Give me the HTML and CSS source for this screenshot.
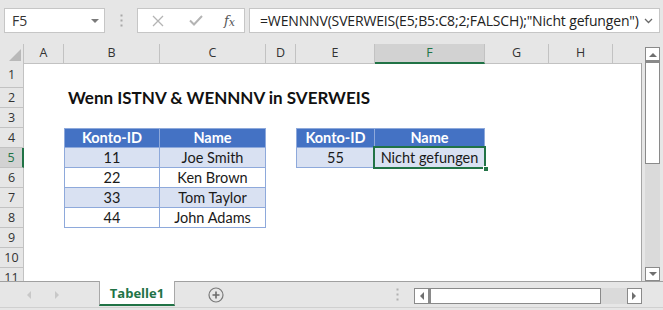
FILE: index.html
```html
<!DOCTYPE html>
<html lang="de">
<head>
<meta charset="utf-8">
<title>SVERWEIS</title>
<link rel="stylesheet" href="styles.css">
</head>
<body>
<div class="app">
  <div class="fbar">
    <div class="namebox"><span>F5</span>
      <svg class="nb-arrow" width="8" height="5" viewBox="0 0 8 5"><path d="M0 0H8L4 4Z" fill="#7a7a7a"/></svg>
    </div>
    <div class="vdots">
      <svg width="3" height="13" viewBox="0 0 3 13"><rect x="0.5" y="0.5" width="2" height="2" fill="#a8a8a8"/><rect x="0.5" y="5.5" width="2" height="2" fill="#a8a8a8"/><rect x="0.5" y="10.5" width="2" height="2" fill="#a8a8a8"/></svg>
    </div>
    <div class="fnbox">
      <svg class="ic-x" width="12" height="12" viewBox="0 0 12 12"><path d="M1 1L11 11M11 1L1 11" stroke="#b4b4b4" stroke-width="1.3" fill="none"/></svg>
      <svg class="ic-ok" width="14" height="11" viewBox="0 0 14 11"><path d="M1 5.5L5 9.5L13 1" stroke="#b4b4b4" stroke-width="2" fill="none"/></svg>
      <span class="fx"><i>f</i><span class="fx-x">x</span></span>
    </div>
    <div class="formula">
      <span class="ftext">=WENNNV(SVERWEIS(E5;B5:C8;2;FALSCH);"Nicht gefungen")</span>
      <svg class="chev" width="9" height="6" viewBox="0 0 9 6"><path d="M1 1L4.5 4.5L8 1" stroke="#6a6a6a" stroke-width="1.3" fill="none"/></svg>
    </div>
  </div>

  <div class="main">
    <div class="sheet">
      <div class="row hdr">
        <div class="corner"><svg width="12" height="12" viewBox="0 0 12 12"><path d="M12 0V12H0Z" fill="#b9b9b9"/></svg></div>
        <div class="ch">A</div><div class="ch">B</div><div class="ch">C</div><div class="ch">D</div><div class="ch">E</div><div class="ch sel">F</div><div class="ch">G</div><div class="ch">H</div><div class="ch last"></div>
      </div>
      <div class="row r1">
        <div class="rh">1</div><div></div><div></div><div></div><div></div><div></div><div></div><div></div><div></div><div class="edge"></div>
      </div>
      <div class="row">
        <div class="rh">2</div><div></div><div class="title-cell"><span class="title">Wenn ISTNV &amp; WENNNV in SVERWEIS</span></div><div></div><div></div><div></div><div></div><div></div><div></div><div class="edge"></div>
      </div>
      <div class="row">
        <div class="rh">3</div><div></div><div></div><div></div><div></div><div></div><div></div><div></div><div></div><div class="edge"></div>
      </div>
      <div class="row">
        <div class="rh">4</div><div></div>
        <div class="t th first">Konto-ID</div><div class="t th">Name</div>
        <div></div>
        <div class="t th first">Konto-ID</div><div class="t th">Name</div>
        <div></div><div></div><div class="edge"></div>
      </div>
      <div class="row">
        <div class="rh sel">5</div><div></div>
        <div class="t band first">11</div><div class="t band">Joe Smith</div>
        <div></div>
        <div class="t band first">55</div><div class="t band active">Nicht gefungen<span class="selbox"></span><span class="handle"></span></div>
        <div></div><div></div><div class="edge"></div>
      </div>
      <div class="row">
        <div class="rh">6</div><div></div>
        <div class="t first">22</div><div class="t">Ken Brown</div>
        <div></div><div></div><div></div><div></div><div></div><div class="edge"></div>
      </div>
      <div class="row">
        <div class="rh">7</div><div></div>
        <div class="t band first">33</div><div class="t band">Tom Taylor</div>
        <div></div><div></div><div></div><div></div><div></div><div class="edge"></div>
      </div>
      <div class="row">
        <div class="rh">8</div><div></div>
        <div class="t first">44</div><div class="t">John Adams</div>
        <div></div><div></div><div></div><div></div><div></div><div class="edge"></div>
      </div>
      <div class="row">
        <div class="rh">9</div><div></div><div></div><div></div><div></div><div></div><div></div><div></div><div></div><div class="edge"></div>
      </div>
      <div class="row">
        <div class="rh">10</div><div></div><div></div><div></div><div></div><div></div><div></div><div></div><div></div><div class="edge"></div>
      </div>
      <div class="row r11">
        <div class="rh">11</div><div></div><div></div><div></div><div></div><div></div><div></div><div></div><div></div><div class="edge"></div>
      </div>
    </div>
    <div class="vscroll">
      <div class="sbtn"><svg width="8" height="5" viewBox="0 0 8 5"><path d="M0 5H8L4 1Z" fill="#6f6f6f"/></svg></div>
      <div class="vthumb"></div>
      <div class="vtrack"></div>
      <div class="sbtn"><svg width="8" height="5" viewBox="0 0 8 5"><path d="M0 0H8L4 4Z" fill="#6f6f6f"/></svg></div>
    </div>
  </div>

  <div class="tabbar">
    <div class="navs">
      <svg width="5" height="8" viewBox="0 0 5 8"><path d="M5 0V8L1 4Z" fill="#c8c8c8"/></svg>
      <svg width="5" height="8" viewBox="0 0 5 8"><path d="M0 0V8L4 4Z" fill="#c8c8c8"/></svg>
    </div>
    <div class="tab">Tabelle1</div>
    <div class="addsheet">
      <svg width="16" height="16" viewBox="0 0 16 16"><circle cx="8" cy="8" r="7" stroke="#7a7a7a" stroke-width="1.2" fill="none"/><path d="M8 4.5V11.5M4.5 8H11.5" stroke="#6a6a6a" stroke-width="1.6"/></svg>
    </div>
    <div class="hdots">
      <svg width="3" height="13" viewBox="0 0 3 13"><rect x="0.5" y="0.5" width="2" height="2" fill="#b0b0b0"/><rect x="0.5" y="5.5" width="2" height="2" fill="#b0b0b0"/><rect x="0.5" y="10.5" width="2" height="2" fill="#b0b0b0"/></svg>
    </div>
    <div class="hscroll">
      <div class="hbtn"><svg width="5" height="8" viewBox="0 0 5 8"><path d="M5 0V8L1 4Z" fill="#6f6f6f"/></svg></div>
      <div class="hthumb"></div>
      <div class="htrack"></div>
      <div class="hbtn"><svg width="5" height="8" viewBox="0 0 5 8"><path d="M0 0V8L4 4Z" fill="#6f6f6f"/></svg></div>
    </div>
  </div>
</div>
</body>
</html>
```

FILE: styles.css
```css
* { box-sizing: border-box; }
html, body { margin: 0; padding: 0; }
body {
  width: 663px;
  height: 310px;
  overflow: hidden;
  background: #e6e6e6;
  font-family: "Open Sans", "Liberation Sans", sans-serif;
  color: #222;
}
.app { width: 663px; height: 310px; display: flex; flex-direction: column; }

/* formula bar */
.fbar {
  height: 44px;
  display: flex;
  align-items: flex-start;
  padding: 8px 0 0 4px;
}
.namebox {
  width: 101px;
  height: 25px;
  background: #fff;
  border: 1px solid #c6c6c6;
  display: flex;
  align-items: center;
  justify-content: space-between;
  padding: 0 5px 0 7px;
  font-size: 14px;
  color: #333;
}
.nb-arrow { margin-top: 1px; }
.vdots {
  width: 32px;
  height: 25px;
  display: flex;
  align-items: center;
  justify-content: center;
}
.fnbox {
  width: 108px;
  height: 25px;
  background: #fff;
  border: 1px solid #c6c6c6;
  display: flex;
  align-items: center;
  padding-left: 14px;
}
.ic-x { margin-right: 25px; }
.ic-ok { margin-right: 21px; }
.fx {
  font-family: "DejaVu Serif", "Liberation Serif", serif;
  font-size: 13px;
  color: #555;
  display: flex;
  align-items: baseline;
}
.fx i { font-style: italic; }
.fx-x { font-size: 11px; font-style: italic; position: relative; top: 1px; margin-left: 0; }
.formula {
  margin-left: 4px;
  width: 411px;
  height: 25px;
  background: #fff;
  border: 1px solid #c6c6c6;
  display: flex;
  align-items: center;
  justify-content: space-between;
  padding: 0 6px 0 10px;
  font-size: 14px;
  color: #222;
  white-space: nowrap;
}
.ftext { letter-spacing: -0.15px; }

/* sheet */
.main { height: 237px; display: flex; }
.sheet { width: 642px; height: 237px; overflow: hidden; }
.row {
  display: grid;
  grid-template-columns: 24px 40px 96px 106px 30px 79px 110px 64px 64px 29px;
  height: 20px;
  background: #fff;
}
.row.hdr { height: 19px; background: #e6e6e6; }
.row.r1 { height: 25px; }
.row.r11 { height: 13px; }
.row > div { position: relative; }
.edge { border-right: 1px solid #a5a5a5; }

.corner {
  border-right: 1px solid #c2c2c2;
  border-bottom: 1px solid #c2c2c2;
  display: flex;
  align-items: flex-end;
  justify-content: flex-end;
  padding: 0 2px 2px 0;
}
.ch {
  border-right: 1px solid #c2c2c2;
  border-bottom: 1px solid #c2c2c2;
  font-size: 12.5px;
  color: #333;
  text-align: center;
  line-height: 18px;
}
.ch.last { border-right: none; }
.ch.sel {
  background: #d2d2d2;
  color: #217346;
  border-bottom: 2px solid #217346;
}
.rh {
  background: #e6e6e6;
  border-right: 1px solid #c2c2c2;
  border-bottom: 1px solid #c2c2c2;
  font-size: 12.5px;
  color: #333;
  text-align: center;
  line-height: 19px;
  overflow: hidden;
}
.r1 .rh { line-height: 24px; }
.r11 .rh { line-height: 19px; border-bottom: none; }
.rh.sel {
  background: #d2d2d2;
  color: #217346;
  border-right: 2px solid #217346;
}

.title-cell { overflow: visible; }
.title {
  position: absolute;
  left: 4px;
  top: 0;
  white-space: nowrap;
  font-family: "Lato", "Liberation Sans", sans-serif;
  font-weight: 700;
  font-size: 17px;
  line-height: 20px;
  color: #111;
}

.t {
  font-family: "Lato", "Liberation Sans", sans-serif;
  font-size: 14.5px;
  color: #1a1a1a;
  text-align: center;
  line-height: 19px;
  border-right: 1px solid #8ea9db;
  border-bottom: 1px solid #8ea9db;
  white-space: nowrap;
}
.t.first { border-left: 1px solid #8ea9db; }
.t.th {
  background: #4472c4;
  color: #fff;
  font-weight: 700;
  border-top: 1px solid #8ea9db;
  line-height: 18px;
}
.t.band { background: #d9e1f2; }
.selbox {
  position: absolute;
  left: -2px;
  top: -2px;
  right: -2px;
  bottom: -2px;
  border: 2px solid #217346;
}
.handle {
  position: absolute;
  right: -5px;
  bottom: -5px;
  width: 6px;
  height: 6px;
  background: #217346;
  border: 1px solid #fff;
}

/* vertical scrollbar */
.vscroll {
  margin-left: 3px;
  width: 15px;
  padding-top: 3px;
  display: flex;
  flex-direction: column;
}
.sbtn {
  height: 14px;
  background: #fff;
  border: 1px solid #8a8a8a;
  display: flex;
  align-items: center;
  justify-content: center;
}
.vthumb {
  height: 103px;
  background: #fff;
  border: 1px solid #8a8a8a;
  border-top: 2px solid #8a8a8a;
}
.vtrack { flex: 1; background: #dadada; }

/* tab bar */
.tabbar {
  height: 27px;
  border-top: 1px solid #a0a0a0;
  border-bottom: 1px solid #d0d0d0;
  display: flex;
  align-items: stretch;
}
.navs {
  width: 99px;
  display: flex;
  align-items: center;
  padding-left: 26px;
  gap: 24px;
}
.tab {
  width: 76px;
  margin-top: -1px;
  background: #fff;
  border-left: 1px solid #a8a8a8;
  border-right: 1px solid #a8a8a8;
  border-bottom: 2px solid #217346;
  color: #217346;
  font-weight: 700;
  font-size: 13px;
  text-align: center;
  line-height: 24px;
  height: 25px;
}
.addsheet {
  width: 83px;
  display: flex;
  align-items: center;
  padding-left: 33px;
}
.hdots {
  width: 156px;
  display: flex;
  align-items: center;
  justify-content: flex-end;
  padding-right: 15px;
}
.hscroll {
  margin-top: 6px;
  height: 16px;
  width: 228px;
  display: flex;
}
.hbtn {
  width: 15px;
  background: #fff;
  border: 1px solid #8a8a8a;
  display: flex;
  align-items: center;
  justify-content: center;
}
.hthumb {
  width: 172px;
  background: #fff;
  border: 1px solid #8a8a8a;
  border-left: 2px solid #8a8a8a;
}
.htrack { flex: 1; background: #dadada; }
```
